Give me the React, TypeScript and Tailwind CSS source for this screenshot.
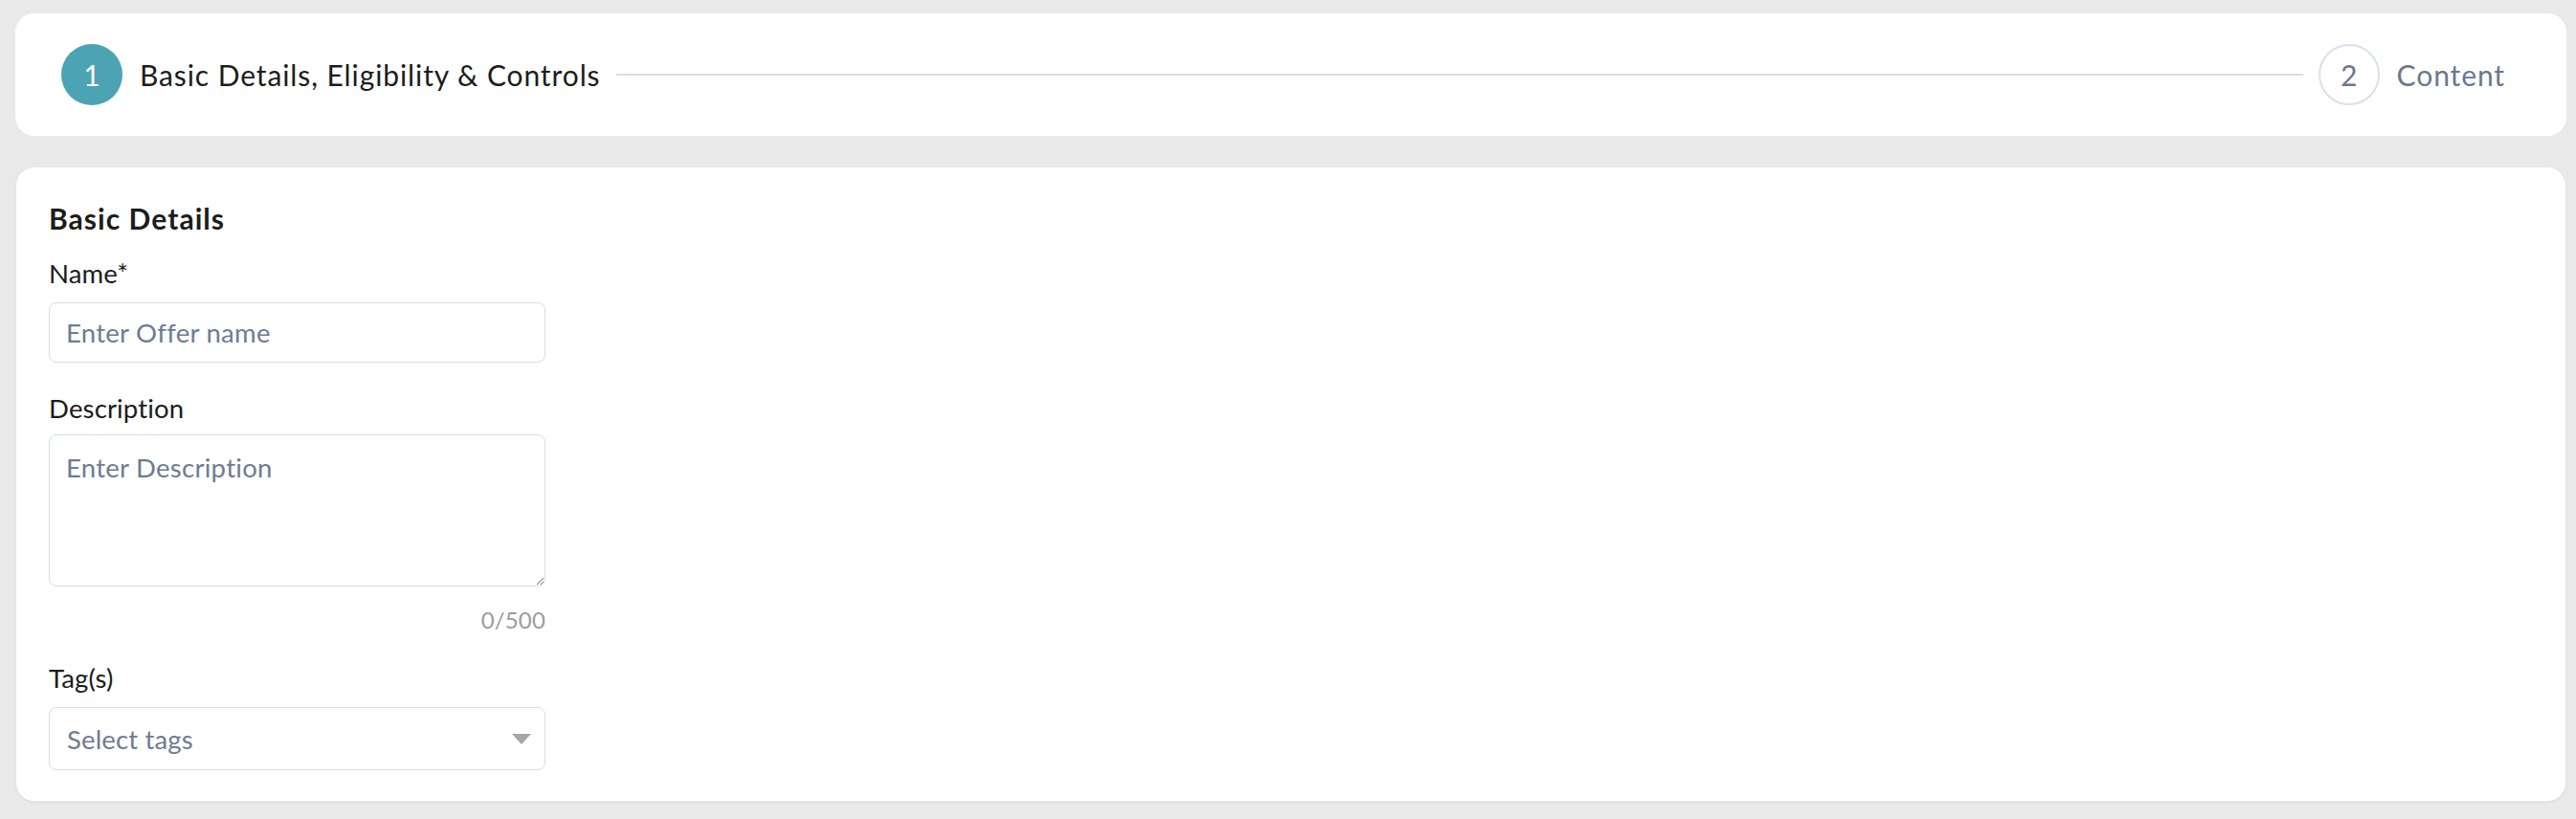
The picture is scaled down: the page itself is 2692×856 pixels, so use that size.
import React from "react";

export default function App() {
  return (
    <div className="min-h-[856px] w-full bg-[#e9e9e9] pl-4 pr-[10px] pt-[14px] pb-[18px] font-['Lato',sans-serif]">
      {/* Stepper card */}
      <div className="flex h-[128px] items-center rounded-[20px] bg-white pl-[48px] pr-[64px]">
        <div className="flex h-[64px] w-[64px] shrink-0 items-center justify-center rounded-full bg-[#4ba3b4] text-[30px] leading-none text-white">
          1
        </div>
        <span className="ml-[18px] text-[30px] leading-[36px] tracking-[0.03em] text-[#1c1c1c] whitespace-nowrap">
          Basic Details, Eligibility &amp; Controls
        </span>
        <div className="mx-[16px] h-[2px] flex-1 bg-[#d8dce7]" />
        <div className="flex h-[64px] w-[64px] shrink-0 items-center justify-center rounded-full border-2 border-[#dce0eb] text-[30px] leading-none text-[#6b7790]">
          2
        </div>
        <span className="ml-[18px] text-[30px] leading-[36px] tracking-[0.03em] text-[#6b7790] whitespace-nowrap">
          Content
        </span>
      </div>

      {/* Basic details card */}
      <div className="mt-[32px] rounded-[20px] border-[1.5px] border-[#e5e8f1] bg-white pl-[34px] pt-[35px] pb-[32px] shadow-[0_1px_2px_rgba(0,0,0,0.06)]">
        <h2 className="text-[30px] font-bold leading-[36px] tracking-[0.035em] text-[#1c1c1c]">Basic Details</h2>

        <div className="w-[519px] tracking-[0.01em]">
          <label className="mt-[23px] block text-[27.5px] leading-[33px] text-[#1c1c1c]">Name*</label>
          <input
            type="text"
            placeholder="Enter Offer name"
            className="mt-[14px] block h-[63px] w-full rounded-[8px] border-[1.7px] border-[#d8dce9] bg-white px-[17px] text-[27.5px] tracking-[0.01em] text-[#1c1c1c] outline-none placeholder:text-[#6e7b92]"
          />

          <label className="mt-[31px] block text-[27.5px] leading-[33px] text-[#1c1c1c]">Description</label>
          <textarea
            placeholder="Enter Description"
            className="mt-[11px] block h-[159px] w-full rounded-[8px] border-[1.7px] border-[#d8dce9] bg-white px-[17px] pt-[17px] text-[27.5px] leading-[33px] tracking-[0.01em] text-[#1c1c1c] outline-none placeholder:text-[#6e7b92]"
          />
          <div className="mt-[20px] text-right text-[24px] leading-[29px] text-[#9c9c9c]">0/500</div>

          <label className="mt-[30px] block text-[27.5px] leading-[33px] text-[#1c1c1c]">Tag(s)</label>
          <div className="mt-[14px] flex h-[66px] w-full items-center justify-between rounded-[8px] border-[1.7px] border-[#d8dce9] bg-white pl-[18px] pr-[14px]">
            <span className="text-[27.5px] leading-[33px] text-[#6e7b92]">Select tags</span>
            <svg width="20" height="11" viewBox="0 0 20 11" className="block">
              <polygon points="0,0 20,0 10,11" fill="#a6a6a6" />
            </svg>
          </div>
        </div>
      </div>
    </div>
  );
}
